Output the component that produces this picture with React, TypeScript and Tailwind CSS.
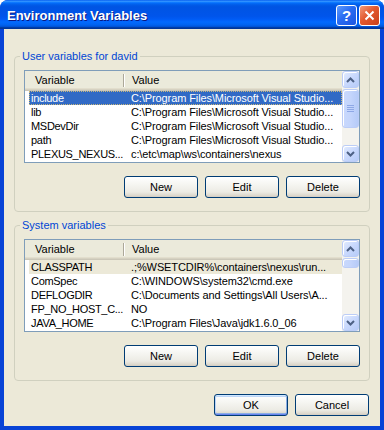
import React from "react";

type Row = { name: string; value: string };

const userRows: Row[] = [
  { name: "include", value: "C:\\Program Files\\Microsoft Visual Studio..." },
  { name: "lib", value: "C:\\Program Files\\Microsoft Visual Studio..." },
  { name: "MSDevDir", value: "C:\\Program Files\\Microsoft Visual Studio..." },
  { name: "path", value: "C:\\Program Files\\Microsoft Visual Studio..." },
  { name: "PLEXUS_NEXUS...", value: "c:\\etc\\map\\ws\\containers\\nexus" },
];

const sysRows: Row[] = [
  { name: "CLASSPATH", value: ".;%WSETCDIR%\\containers\\nexus\\run..." },
  { name: "ComSpec", value: "C:\\WINDOWS\\system32\\cmd.exe" },
  { name: "DEFLOGDIR", value: "C:\\Documents and Settings\\All Users\\A..." },
  { name: "FP_NO_HOST_C...", value: "NO" },
  { name: "JAVA_HOME", value: "C:\\Program Files\\Java\\jdk1.6.0_06" },
];

function Arrow({ dir }: { dir: "up" | "down" }) {
  return (
    <svg width="9" height="6" viewBox="0 0 9 6">
      <path
        d={dir === "up" ? "M1 5 L4.5 1.5 L8 5" : "M1 1 L4.5 4.5 L8 1"}
        stroke="#4d6185"
        strokeWidth="2"
        fill="none"
      />
    </svg>
  );
}

const sbBtn =
  "w-[17px] h-[17px] rounded-[3px] border border-[#bccdf7] bg-[linear-gradient(135deg,#e3ecfe_0%,#c9d9fd_50%,#b6cbf8_100%)] shadow-[inset_1px_1px_0_#ffffff] flex items-center justify-center shrink-0";

function ScrollBar({ thumbH, grip }: { thumbH: number; grip: boolean }) {
  return (
    <div className="w-[17px] h-full flex flex-col bg-[#f4f3ee]">
      <div className={sbBtn}>
        <Arrow dir="up" />
      </div>
      <div
        className="w-[17px] mt-[1px] rounded-[3px] border border-[#bccdf7] bg-[linear-gradient(90deg,#c9d9fd_0%,#c4d5fc_50%,#b6cbf8_100%)] shadow-[inset_1px_1px_0_#ffffff] flex flex-col items-center justify-center gap-[1px] shrink-0"
        style={{ height: thumbH }}
      >
        {grip && (
          <>
            <div className="w-[7px] h-[1px] bg-[#8ea8e6]" />
            <div className="w-[7px] h-[1px] bg-[#8ea8e6]" />
            <div className="w-[7px] h-[1px] bg-[#8ea8e6]" />
            <div className="w-[7px] h-[1px] bg-[#8ea8e6]" />
          </>
        )}
      </div>
      <div className="flex-1" />
      <div className={sbBtn}>
        <Arrow dir="down" />
      </div>
    </div>
  );
}

function ListView({
  rows,
  active,
  thumbH,
  grip,
}: {
  rows: Row[];
  active: boolean;
  thumbH: number;
  grip: boolean;
}) {
  return (
    <div className="w-[336px] h-[93px] border border-[#7f9db9] bg-white flex">
      <div className="flex-1 flex flex-col overflow-hidden">
        <div className="h-[20px] shrink-0 bg-[#ebeadb] shadow-[inset_0_-1px_0_#cbc7b8,inset_0_-2px_0_#d6d2c2,inset_0_-3px_0_#e2decd] flex items-center pb-[2px]">
          <div className="w-[98px] pl-[10px]">Variable</div>
          <div className="w-[2px] h-[13px] border-l border-l-[#aca899] border-r border-r-white" />
          <div className="pl-[7px]">Value</div>
        </div>
        <div className="flex flex-col">
          {rows.map((r, i) => {
            const sel = i === 0;
            const cls = sel
              ? active
                ? "bg-[#316ac5] text-white outline-1 outline-dotted outline-[#c9b77a] -outline-offset-1"
                : "bg-[#ece9d8] text-black"
              : "text-black";
            return (
              <div key={i} className={`h-[14px] ml-[4px] flex items-center whitespace-nowrap ${cls}`}>
                <div className="w-[95px] pl-[2px] overflow-hidden shrink-0 tracking-[-0.3px]">{r.name}</div>
                <div className="flex-1 pl-[7px] overflow-hidden tracking-[-0.1px]">{r.value}</div>
              </div>
            );
          })}
        </div>
      </div>
      <ScrollBar thumbH={thumbH} grip={grip} />
    </div>
  );
}

function XPButton({ label, def }: { label: string; def?: boolean }) {
  return (
    <div
      className={`w-[74px] h-[22px] rounded-[3px] border border-[#003c74] bg-[linear-gradient(180deg,#ffffff_0%,#f6f6f2_35%,#ecebe4_75%,#d6d0c3_100%)] flex items-center justify-center text-black ${
        def
          ? "shadow-[inset_0_1px_0_#cee7ff,inset_0_-1px_0_#6982ee,inset_1px_0_0_#bcd4f6,inset_-1px_0_0_#89ade4,inset_0_2px_0_#bcd4f6,inset_0_-2px_0_#89ade4]"
          : "shadow-[inset_0_-1px_0_#d6d0c5]"
      }`}
    >
      {label}
    </div>
  );
}

function Group({
  title,
  rows,
  active,
  thumbH,
  grip,
  className,
}: {
  title: string;
  rows: Row[];
  active: boolean;
  thumbH: number;
  grip: boolean;
  className?: string;
}) {
  return (
    <fieldset
      className={`border border-[#d0d0bf] rounded-[4px] pl-[9px] pr-[9px] pt-[7px] pb-[13px] ${className ?? ""}`}
    >
      <legend className="ml-[-4px] px-[2px] leading-[13px] text-[#0046d5]">{title}</legend>
      <ListView rows={rows} active={active} thumbH={thumbH} grip={grip} />
      <div className="flex justify-end gap-[7px] mt-[13px]">
        <XPButton label="New" />
        <XPButton label="Edit" />
        <XPButton label="Delete" />
      </div>
    </fieldset>
  );
}

export default function App() {
  return (
    <div className="w-[384px] h-[430px] bg-white font-['Liberation_Sans',Arial,sans-serif] text-[11px] leading-[13px]">
      <div className="w-full h-full rounded-t-[8px] overflow-hidden bg-[#0843d6] flex flex-col">
        <div className="h-[29px] shrink-0 bg-[linear-gradient(180deg,#0058ee_0%,#3593ff_4%,#288eff_6%,#127dff_8%,#036ffc_10%,#0262ee_14%,#0057e5_20%,#0054e3_24%,#0055eb_56%,#005bf5_66%,#026afe_76%,#0062ef_86%,#0052d6_92%,#0040ab_94%,#003092_100%)] flex items-center justify-between pl-[7px] pr-[4px] pt-[2px]">
          <div className="text-white font-bold text-[13px] [text-shadow:1px_1px_0_#0a1883]">
            Environment Variables
          </div>
          <div className="flex gap-[2px] mt-[-1px]">
            <div className="w-[21px] h-[21px] rounded-[3px] border border-white bg-[linear-gradient(135deg,#5e9bfd_0%,#2a6cf2_45%,#1c55e0_100%)] flex items-center justify-center text-white font-bold text-[15px] leading-none">
              ?
            </div>
            <div className="w-[21px] h-[21px] rounded-[3px] border border-white bg-[linear-gradient(135deg,#f29a7a_0%,#e2582e_45%,#c9401a_100%)] flex items-center justify-center">
              <svg width="11" height="11" viewBox="0 0 11 11">
                <path d="M1.5 1.5 L9.5 9.5 M9.5 1.5 L1.5 9.5" stroke="white" strokeWidth="2" />
              </svg>
            </div>
          </div>
        </div>
        <div className="flex-1 mx-[4px] mb-[4px] bg-[#ece9d8] px-[10px] pt-[21px] flex flex-col">
          <Group title="User variables for david" rows={userRows} active={true} thumbH={39} grip={true} />
          <Group
            title="System variables"
            rows={sysRows}
            active={false}
            thumbH={10}
            grip={false}
            className="mt-[7px]"
          />
          <div className="flex justify-end gap-[7px] mt-[13px] pr-[1px]">
            <XPButton label="OK" def />
            <XPButton label="Cancel" />
          </div>
        </div>
      </div>
    </div>
  );
}
